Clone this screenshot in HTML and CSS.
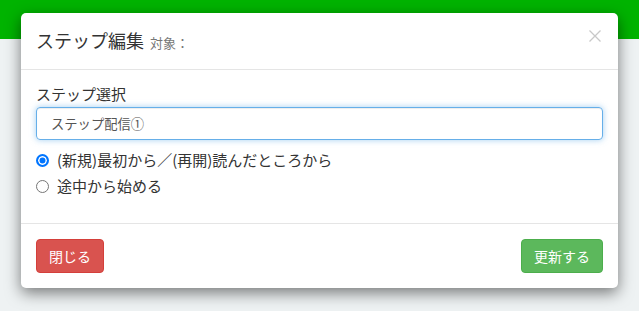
FILE: index.html
```html
<!DOCTYPE html>
<html lang="ja">
<head>
<meta charset="utf-8">
<link rel="stylesheet" href="styles.css">
</head>
<body>
<div class="topbar"></div>
<div class="backdrop">
  <div class="modal">
    <div class="modal-header">
      <h4 class="modal-title">ステップ編集 <small>対象：</small></h4>
      <span class="close">
        <svg width="12" height="12" viewBox="0 0 12 12"><path d="M0.5 0.5 L11.5 11.5 M11.5 0.5 L0.5 11.5" stroke="#c8c8c8" stroke-width="1.3" fill="none"/></svg>
      </span>
    </div>
    <div class="modal-body">
      <label class="label">ステップ選択</label>
      <div class="input">ステップ配信①</div>
      <div class="radios">
        <label class="radio"><span class="dot checked"></span>(新規)最初から／(再開)読んだところから</label>
        <label class="radio"><span class="dot"></span>途中から始める</label>
      </div>
    </div>
    <div class="modal-footer">
      <button class="btn btn-danger">閉じる</button>
      <button class="btn btn-success">更新する</button>
    </div>
  </div>
</div>
</body>
</html>
```

FILE: styles.css
```css
* { box-sizing: border-box; }
html, body { margin: 0; padding: 0; }
body {
  width: 639px;
  height: 311px;
  overflow: hidden;
  background: #eef2f3;
  font-family: "Noto Sans CJK JP", "Noto Sans", sans-serif;
  color: #333;
  font-size: 14px;
  position: relative;
}
.topbar {
  height: 39px;
  background: #00b300;
}
.backdrop {
  position: absolute;
  left: 0; top: 0; right: 0; bottom: 0;
  padding: 13px 21px 0;
}
.modal {
  background: #fff;
  border-radius: 5px;
  box-shadow: 0 5px 15px rgba(0,0,0,0.5);
}
.modal-header {
  display: flex;
  align-items: center;
  justify-content: space-between;
  padding: 0 15px;
  height: 57px;
  border-bottom: 1px solid #e5e5e5;
}
.modal-title {
  margin: 0;
  font-size: 18px;
  font-weight: normal;
  color: #333;
  line-height: 26px;
}
.modal-title small {
  font-size: 13px;
  color: #777;
  margin-left: 2px;
}
.close {
  display: flex;
  margin-right: 2px;
  margin-top: -10px;
}
.modal-body {
  padding: 14px 15px 27px;
}
.label {
  display: block;
  line-height: 20px;
  font-size: 15px;
  margin-bottom: 3px;
}
.input {
  height: 33px;
  border: 1px solid #66afe9;
  border-radius: 4px;
  box-shadow: inset 0 1px 1px rgba(0,0,0,.075), 0 0 6px rgba(102,175,233,.6);
  padding: 0 14px;
  display: flex;
  align-items: center;
  color: #555;
  font-size: 13.3px;
}
.radios {
  display: flex;
  flex-direction: column;
  gap: 6px;
  margin-top: 10px;
}
.radio {
  display: flex;
  align-items: center;
  line-height: 20px;
  font-size: 15px;
  color: #333;
}
.dot {
  width: 13px;
  height: 13px;
  border-radius: 50%;
  border: 1px solid #767676;
  margin: 0 8px 0 0;
  background: #fff;
  flex: none;
}
.dot.checked {
  border: 2px solid #0075ff;
  background: #0075ff;
  box-shadow: inset 0 0 0 1.5px #fff;
}
.modal-footer {
  border-top: 1px solid #e5e5e5;
  padding: 15px;
  display: flex;
  justify-content: space-between;
}
.btn {
  height: 34px;
  border-radius: 4px;
  border: 1px solid;
  color: #fff;
  font-family: inherit;
  font-size: 14px;
  padding: 0 12px;
}
.btn-danger { background: #d9534f; border-color: #d43f3a; }
.btn-success { background: #5cb85c; border-color: #4cae4c; }
```
